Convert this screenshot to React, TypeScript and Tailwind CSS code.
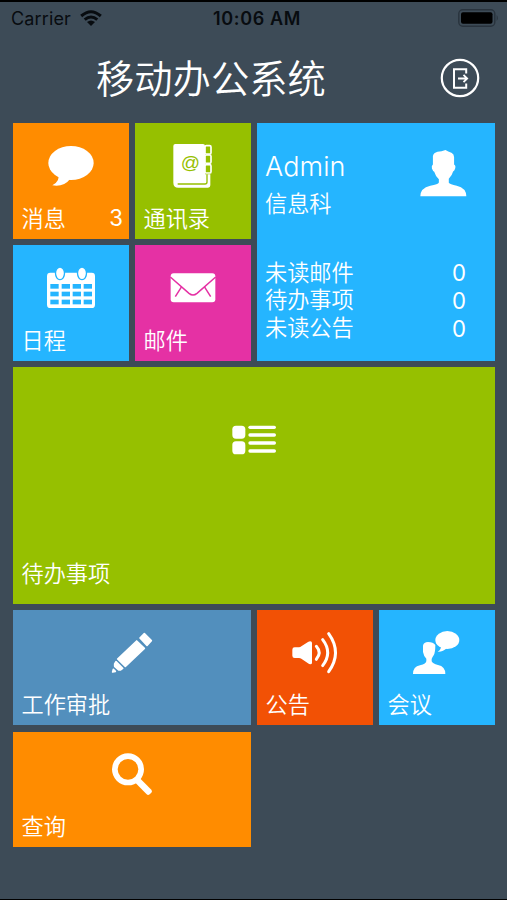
import type { ReactNode } from "react";

type TileProps = {
    label: string
    className: string
    count?: number
    iconClass?: string
    labelClass?: string
    children: ReactNode
}

const todoCounts = [
    { name: '未读邮件', value: 0 },
    { name: '待办事项', value: 0 },
    { name: '未读公告', value: 0 },
]

const Icon = ({ children }: { children: ReactNode }) => (
    <svg viewBox="0 0 180 180" className="h-[60px] w-[60px]" fill="#fff">{children}</svg>
)

const MessageIcon = () => (
    <Icon>
        <ellipse cx="90" cy="81" rx="68" ry="51" />
        <path d="M52 114Q58 136 34 148Q68 154 88 128Z" />
    </Icon>
)

const ContactsIcon = () => (
    <Icon>
        <path d="M37 24H120Q126 24 126 30V115H142V148Q142 155 135 155H46Q31 155 31 140V30Q31 24 37 24Z" />
        <g fill="none" stroke="#fff" strokeWidth="5">
            <rect x="126" y="29" width="18" height="25" rx="4" />
            <rect x="126" y="57" width="18" height="25" rx="4" />
            <rect x="126" y="86" width="18" height="25" rx="4" />
        </g>
        <path d="M132 115V138Q132 144 126 144H44" fill="none" stroke="#96c000" strokeWidth="4" />
        <text x="82" y="98" textAnchor="middle" fontSize="57" fill="#96c000" className="font-['Liberation_Sans',sans-serif] font-normal">@</text>
    </Icon>
)

const CalendarIcon = () => (
    <Icon>
        <rect x="18" y="44" width="144" height="106" rx="10" />
        {[57, 123].map((x) => (
            <ellipse key={x} cx={x} cy="46" rx="13.5" ry="19" stroke="#25b5ff" strokeWidth="4" />
        ))}
        {[78, 101, 125].map((y) => [28, 62, 95, 128].map((x) => (
            <rect key={`${x}-${y}`} x={x} y={y} width="25" height="14" fill="#25b5ff" />
        )))}
    </Icon>
)

const MailIcon = () => (
    <Icon>
        <rect x="23" y="46" width="134" height="87" rx="9" />
        <g fill="none" stroke="#e531a4" strokeWidth="4.5">
            <path d="M22 57L78 106Q90 116 102 106L158 57" />
            <path d="M56 86L37 116M124 86L143 116" />
        </g>
    </Icon>
)

const ListIcon = () => (
    <Icon>
        <rect x="25" y="47" width="39" height="39" rx="11" />
        <rect x="25" y="94" width="39" height="39" rx="11" />
        {[47, 70, 94, 118].map((y) => (
            <rect key={y} x="73" y={y} width="83" height="10" rx="5" />
        ))}
    </Icon>
)

const PencilIcon = () => (
    <Icon>
        <g stroke="#fff" strokeWidth="5" strokeLinejoin="round">
            <path d="M127 32L148 53L135 67L114 45Z" />
            <path d="M104 54L127 76L70 130L47 108Z" />
            <path d="M42 116L62 136L55 141L50 141L38 130V123Z" />
            <path d="M34 139L40 145L32 147Z" />
        </g>
    </Icon>
)

const SpeakerIcon = () => (
    <Icon>
        <path d="M29 73H42Q46 73 49 70L69 57Q72 55 76 55Q81 55 81 60V119Q81 124 76 124Q72 124 69 121L49 107Q46 105 42 105H29Q22 105 22 98V80Q22 73 29 73Z" />
        <g fill="none" stroke="#fff" strokeWidth="9" strokeLinecap="round">
            <path d="M94 70Q111 89 94 109" />
            <path d="M113 50Q143 89 113 128" />
            <path d="M131 32Q172 89 131 146" />
        </g>
    </Icon>
)

const MeetingIcon = () => (
    <Icon>
        <ellipse cx="121" cy="51" rx="36" ry="27" />
        <path d="M101 68Q104 79 92 86Q108 87 120 75Z" />
        <path d="M48 68Q50 57 63 57Q79 57 85 66Q85 89 80 97Q75 104 74 108V115Q76 122 93 126Q115 130 115 153H18Q18 131 39 127Q58 122 58 114V107Q50 99 48 87Z" />
    </Icon>
)

const SearchIcon = () => (
    <Icon>
        <circle cx="78" cy="73" r="39.5" fill="none" stroke="#fff" strokeWidth="17" />
        <path d="M110 96L148 134Q152 138 148 143L143 148Q138 152 134 148L97 110Z" />
    </Icon>
)

const Tile = ({ label, className, count, iconClass = 'pt-[13px]', labelClass = 'pb-[6px]', children }: TileProps) => (
    <button type="button" className={`flex flex-col items-center justify-between ${className}`}>
        <span className={iconClass}>{children}</span>
        <span className={`flex h-[38px] w-full items-end justify-between pl-[8.5px] pr-[6px] text-[22.2px] leading-[32px] ${labelClass}`}>
            <span>{label}</span>
            {count !== undefined && <span className="font-['Inter',sans-serif] font-normal leading-[31px]">{count}</span>}
        </span>
    </button>
)

const StatusBar = () => (
    <div className="grid h-[32px] grid-cols-3 items-center pl-[11px] pr-[8px] font-['Inter',sans-serif] text-[18px] text-[#080c10]">
        <div className="flex items-center gap-[9px]">
            <span className="font-normal tracking-[0.15px]">Carrier</span>
            <svg viewBox="0 0 22 16" className="h-4 w-[22px]" fill="none" stroke="#080c10" strokeWidth="3">
                <path d="M1.2 6Q11 -2.6 20.8 6" />
                <path d="M4.7 9.7Q11 4.2 17.3 9.7" />
                <path d="M7 12Q11 8.8 15 12L11 16Z" fill="#080c10" stroke="none" />
            </svg>
        </div>
        <span className="whitespace-nowrap pl-1 text-center text-[18px] font-semibold tracking-[0.65px]">10:06 AM</span>
        <svg viewBox="0 0 41 18" className="h-[18px] w-[41px] justify-self-end">
            <rect x="0.8" y="0.8" width="36" height="16.4" rx="4" fill="none" stroke="#29333d" strokeWidth="1.4" />
            <rect x="3" y="3.2" width="31.5" height="11.6" rx="2" fill="#000" />
            <path d="M38.7 6V12Q41 9 38.7 6Z" fill="#29333d" />
        </svg>
    </div>
)

const Header = () => (
    <header className="flex h-[89.4px] items-start justify-between pl-[96px] pr-[27.5px] pt-[18px]">
        <h1 className="text-[38.3px] leading-[50px]">移动办公系统</h1>
        <button type="button" className="pt-[5.5px]">
            <svg viewBox="0 0 40 40" className="h-10 w-10" fill="none" stroke="#fff">
                <circle cx="20" cy="20" r="18.2" strokeWidth="2.2" />
                <path d="M26.2 15.5V11.2H14V29.8H26.2V25.5" strokeWidth="2" />
                <path d="M18 20.5H27M23.5 16.8L27.2 20.5L23.5 24.2" strokeWidth="1.8" />
            </svg>
        </button>
    </header>
)

const ProfileTile = () => (
    <section className="col-span-2 row-span-2 bg-[#25b5ff] pl-[8px] pr-[28px]">
        <div className="flex h-[134.5px] items-start justify-between pt-[27px]">
            <div>
                <div className="font-['Inter',sans-serif] text-[27px] leading-[34px] tracking-[0.1px]">Admin</div>
                <div className="mt-px text-[22.2px] leading-[34px]">信息科</div>
            </div>
            <svg viewBox="0 0 140 142" className="h-[47px] w-[47px]" fill="#fff">
                <path d="M38 18Q40 8 52 5Q64 5 76 0Q84 5 94 8Q102 12 102 22V44Q108 47 105 57Q103 63 99 65Q96 77 86 87V99Q89 104 110 108Q139 115 139 140H0Q0 115 30 108Q54 104 56 98V88Q45 78 42 66Q38 64 35 56Q33 47 38 44Z" />
            </svg>
        </div>
        {todoCounts.map((item) => (
            <div key={item.name} className="flex h-[27.6px] items-center justify-between text-[22.2px] leading-[27.6px]">
                <span>{item.name}</span>
                <span className="pr-[1px] pt-[3px] font-['Inter',sans-serif] font-normal">{item.value}</span>
            </div>
        ))}
    </section>
)

const App = () => {
    return (
        <div className="h-[900px] w-[507px] overflow-hidden border-b border-t-2 border-black bg-[#3d4b57] font-['Noto_Sans_CJK_SC',sans-serif] font-[350] text-white">
            <StatusBar />
            <Header />
            <main className="ml-[13px] grid grid-cols-[repeat(4,116px)] grid-rows-[repeat(6,115.5px)] gap-x-[6px] gap-y-[6.15px]">
                <Tile label="消息" count={3} className="bg-[#ff8c00]"><MessageIcon /></Tile>
                <Tile label="通讯录" className="bg-[#96c000]"><ContactsIcon /></Tile>
                <ProfileTile />
                <Tile label="日程" className="bg-[#25b5ff]"><CalendarIcon /></Tile>
                <Tile label="邮件" className="bg-[#e531a4]"><MailIcon /></Tile>
                <Tile label="待办事项" className="col-span-4 row-span-2 bg-[#96c000]" iconClass="pt-[43px]" labelClass="mb-[10px] pb-[6px]"><ListIcon /></Tile>
                <Tile label="工作审批" className="col-span-2 bg-[#528fbd]"><PencilIcon /></Tile>
                <Tile label="公告" className="bg-[#f25105]"><SpeakerIcon /></Tile>
                <Tile label="会议" className="bg-[#25b5ff]"><MeetingIcon /></Tile>
                <Tile label="查询" className="col-span-2 bg-[#ff8c00]"><SearchIcon /></Tile>
            </main>
        </div>
    );
}

export default App;
